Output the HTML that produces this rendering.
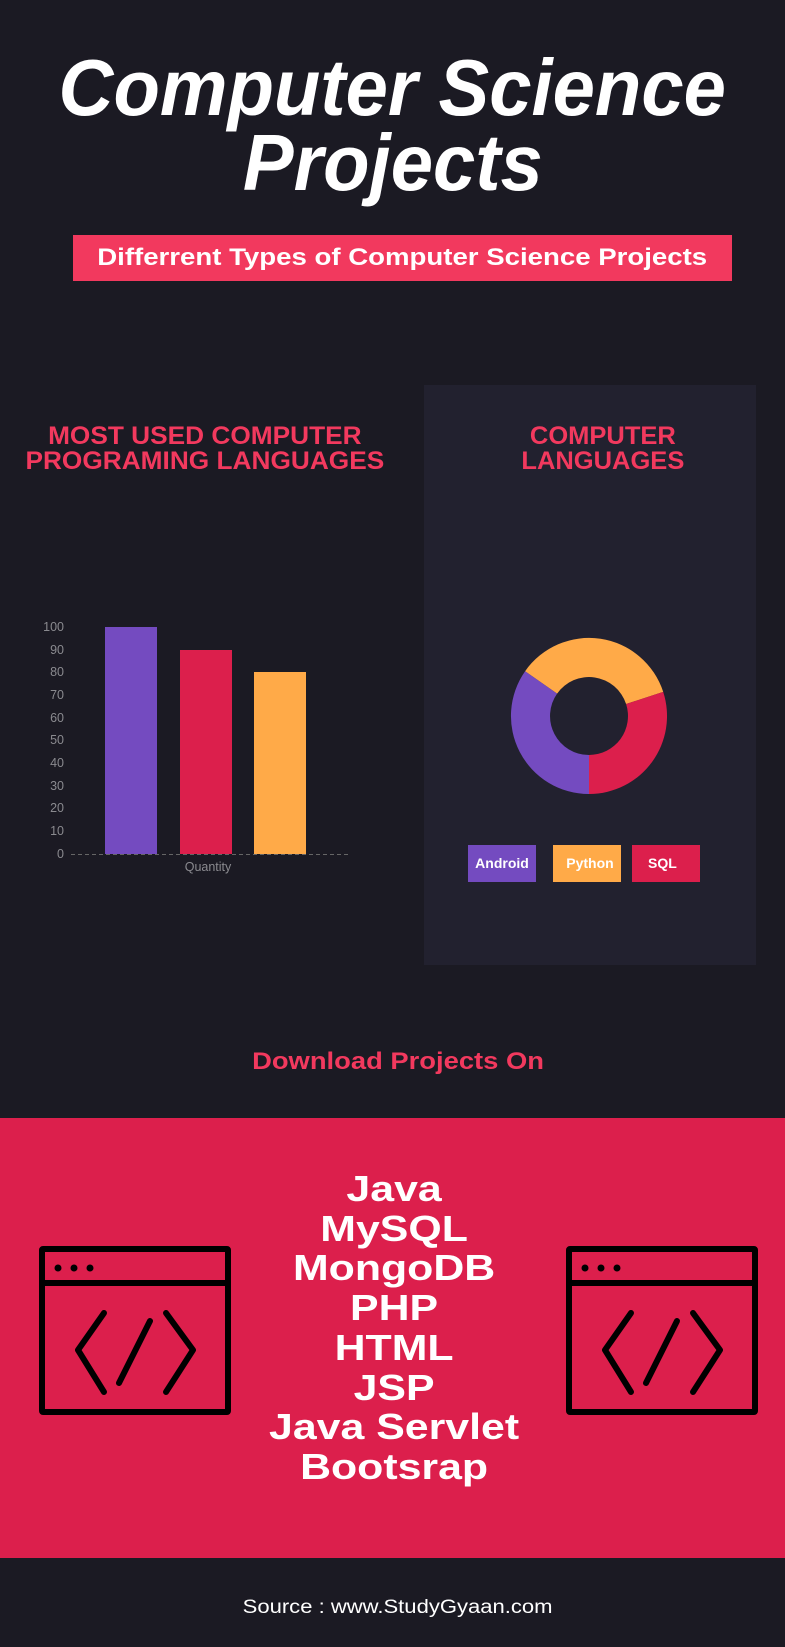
<!DOCTYPE html>
<html><head><meta charset="utf-8"><style>
*{margin:0;padding:0;box-sizing:border-box}
body{width:785px;height:1647px;background:#1b1a23;font-family:"Liberation Sans",sans-serif;position:relative;overflow:hidden}
.abs{position:absolute}
.title{left:0;width:785px;text-align:center;color:#fff;font-weight:bold;font-style:italic;font-size:80px;line-height:75px}
.title span{display:inline-block;transform:scaleX(0.95)}
.pink{color:#f2395e;font-weight:bold}
.sx{display:inline-block;transform-origin:center}
</style></head><body>
<div class="abs title" style="top:50px"><span>Computer Science</span><br><span>Projects</span></div>
<div class="abs" style="left:73px;top:235px;width:659px;height:46px;background:#f2395e"></div>
<div class="abs" style="left:73px;top:235px;width:659px;height:46px;line-height:46px;text-align:center;color:#fff;font-weight:bold;font-size:24px"><span class="sx" style="transform:scaleX(1.15)">Differrent Types of Computer Science Projects</span></div>

<div class="abs" style="left:424px;top:385px;width:332px;height:580px;background:#22212f"></div>
<div class="abs pink" style="left:0;top:424px;width:410px;text-align:center;font-size:25px;line-height:25px"><span class="sx" style="transform:scaleX(1.05)">MOST USED COMPUTER<br>PROGRAMING LANGUAGES</span></div>
<div class="abs pink" style="left:424px;top:424px;width:358px;text-align:center;font-size:25px;line-height:25px"><span class="sx" style="transform:scaleX(1.02)">COMPUTER<br>LANGUAGES</span></div>

<svg class="abs" style="left:0;top:0" width="785" height="1647">
<g font-family="Liberation Sans" font-size="12.5" fill="#8a8a8f" text-anchor="end">
<text x="64" y="631">100</text><text x="64" y="654">90</text><text x="64" y="676">80</text><text x="64" y="699">70</text><text x="64" y="722">60</text><text x="64" y="744">50</text><text x="64" y="767">40</text><text x="64" y="790">30</text><text x="64" y="812">20</text><text x="64" y="835">10</text><text x="64" y="858">0</text>
</g>
<rect x="105" y="627" width="52" height="227" fill="#744bc0"/>
<rect x="180" y="650" width="52" height="204" fill="#dc1f4c"/>
<rect x="254" y="672" width="52" height="182" fill="#ffaa48"/>
<line x1="71" y1="854.5" x2="348" y2="854.5" stroke="#666" stroke-dasharray="4,3"/>
<text x="208" y="871" font-family="Liberation Sans" font-size="12.5" fill="#8a8a8f" text-anchor="middle">Quantity</text>
<path d="M525.1 671.2 A78 78 0 0 1 663.2 691.9 L626.1 704 A39 39 0 0 0 557.1 693.6 Z" fill="#ffaa48"/>
<path d="M663.2 691.9 A78 78 0 0 1 589 794 L589 755 A39 39 0 0 0 626.1 704 Z" fill="#dc1f4c"/>
<path d="M589 794 A78 78 0 0 1 525.1 671.2 L557.1 693.6 A39 39 0 0 0 589 755 Z" fill="#744bc0"/>
<rect x="468" y="845" width="68" height="37" fill="#744bc0"/>
<rect x="553" y="845" width="68" height="37" fill="#ffaa48"/>
<rect x="632" y="845" width="68" height="37" fill="#dc1f4c"/>
<g font-family="Liberation Sans" font-weight="bold" font-size="14" fill="#fff">
<text x="502" y="868" text-anchor="middle">Android</text>
<text x="590" y="868" text-anchor="middle">Python</text>
<text x="648" y="868">SQL</text>
</g>
</svg>

<div class="abs pink" style="left:6px;top:1048px;width:785px;text-align:center;font-size:24px"><span class="sx" style="transform:scaleX(1.14)">Download Projects On</span></div>

<div class="abs" style="left:0;top:1118px;width:785px;height:440px;background:#dc1f4c"></div>
<div class="abs" style="left:2px;top:1169px;width:785px;text-align:center;color:#fff;font-weight:bold;font-size:36px;line-height:39.7px"><span class="sx" style="transform:scaleX(1.19)">Java<br>MySQL<br>MongoDB<br>PHP<br>HTML<br>JSP<br>Java Servlet<br>Bootsrap</span></div>

<svg class="abs" style="left:0;top:0" width="785" height="1647" fill="none" stroke="#000" stroke-width="6" stroke-linecap="round" stroke-linejoin="round">
<g>
<rect x="42" y="1249" width="186" height="163" rx="1" stroke-linecap="butt"/>
<line x1="42" y1="1283" x2="228" y2="1283"/>
<circle cx="58" cy="1268" r="3.5" fill="#000" stroke="none"/><circle cx="74" cy="1268" r="3.5" fill="#000" stroke="none"/><circle cx="90" cy="1268" r="3.5" fill="#000" stroke="none"/>
<polyline points="104,1313 78,1350 104,1392"/>
<line x1="150" y1="1321" x2="119" y2="1383"/>
<polyline points="166,1313 193,1350 166,1392"/>
</g>
<g transform="translate(527,0)">
<rect x="42" y="1249" width="186" height="163" rx="1" stroke-linecap="butt"/>
<line x1="42" y1="1283" x2="228" y2="1283"/>
<circle cx="58" cy="1268" r="3.5" fill="#000" stroke="none"/><circle cx="74" cy="1268" r="3.5" fill="#000" stroke="none"/><circle cx="90" cy="1268" r="3.5" fill="#000" stroke="none"/>
<polyline points="104,1313 78,1350 104,1392"/>
<line x1="150" y1="1321" x2="119" y2="1383"/>
<polyline points="166,1313 193,1350 166,1392"/>
</g>
</svg>

<div class="abs" style="left:5px;top:1597px;width:785px;text-align:center;color:#fff;font-size:19px"><span class="sx" style="transform:scaleX(1.16)">Source : www.StudyGyaan.com</span></div>
</body></html>
